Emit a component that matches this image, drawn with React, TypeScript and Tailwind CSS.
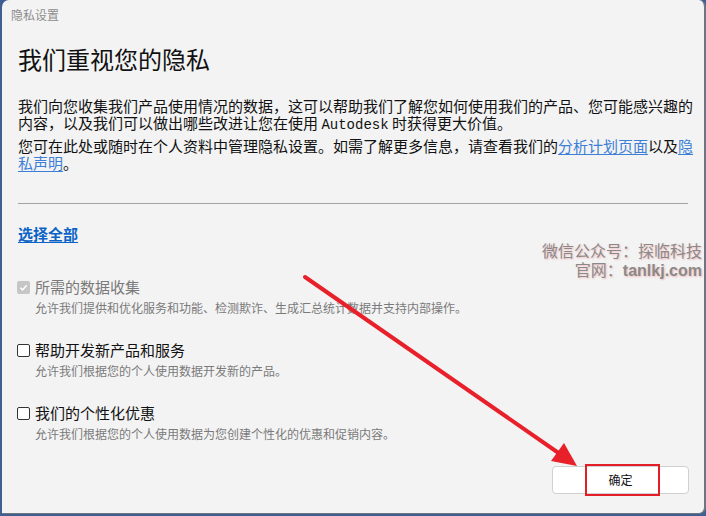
import React from 'react';

const cjk = { fontFamily: '"Noto Sans CJK SC", "Noto Sans", sans-serif' };

function Option({ label, desc, checked, disabled }: { label: string; desc: string; checked?: boolean; disabled?: boolean }) {
  return (
    <div className="flex flex-col">
      <div className="flex items-center gap-[5px]">
        {disabled ? (
          <span className="w-[13px] h-[13px] rounded-[2px] bg-[#c6c6c6] flex items-center justify-center">
            {checked && (
              <svg width="9" height="9" viewBox="0 0 10 10">
                <path d="M1.5 5.2 L4 7.6 L8.6 2.4" fill="none" stroke="#fff" strokeWidth="1.6" />
              </svg>
            )}
          </span>
        ) : (
          <span className="w-[13px] h-[13px] rounded-[2px] border border-[#333] bg-white" />
        )}
        <span className={`text-[15px] leading-[20px] ${disabled ? 'text-[#7a7a7a]' : 'text-[#111]'}`}>{label}</span>
      </div>
      <div className="pl-[18px] mt-[3px] text-[12px] leading-[16px] text-[#7a7a7a]">{desc}</div>
    </div>
  );
}

export default function App() {
  return (
    <div className="w-[706px] h-[516px] bg-[#3f5f93] pl-[2px] pb-[2px] overflow-hidden" style={cjk}>
      <div className="relative w-full h-full bg-[#f3f3f3] rounded-t-[7px] rounded-br-[7px] border-r-[2px] border-b-[1px] border-[#6e7682] flex flex-col">
        <div className="h-[30px] flex items-center px-[9px] text-[12px] text-[#8d8d8d]">隐私设置</div>

        <div className="px-[16px] flex flex-col">
          <h1 className="mt-[14px] text-[24px] leading-[30px] text-[#111] font-normal">我们重视您的隐私</h1>

          <p className="mt-[23px] w-[678px] text-[15px] leading-[17px] text-[#111]">
            我们向您收集我们产品使用情况的数据，这可以帮助我们了解您如何使用我们的产品、您可能感兴趣的内容，以及我们可以做出哪些改进让您在使用{' '}
            <span style={{ fontFamily: '"Liberation Mono", monospace' }} className="text-[14px]">Autodesk</span> 时获得更大价值。
          </p>
          <p className="mt-[3px] w-[678px] text-[15px] leading-[17px] text-[#111]">
            您可在此处或随时在个人资料中管理隐私设置。如需了解更多信息，请查看我们的
            <span className="text-[#3d7fd6] underline underline-offset-2">分析计划页面</span>以及
            <span className="text-[#3d7fd6] underline underline-offset-2">隐私声明</span>。
          </p>

          <div className="mt-[32px] h-px w-[670px] bg-[#a3a3a3]" />

          <div className="mt-[19px] text-[15px] leading-[22px] font-bold text-[#0b63c7] underline underline-offset-2">选择全部</div>

          <div className="mt-[32px] flex flex-col gap-[24px] -ml-[1px]">
            <Option label="所需的数据收集" desc="允许我们提供和优化服务和功能、检测欺诈、生成汇总统计数据并支持内部操作。" checked disabled />
            <Option label="帮助开发新产品和服务" desc="允许我们根据您的个人使用数据开发新的产品。" />
            <Option label="我们的个性化优惠" desc="允许我们根据您的个人使用数据为您创建个性化的优惠和促销内容。" />
          </div>
        </div>

        <div className="mt-auto mb-[19px] pr-[15px] flex justify-end">
          <button className="relative w-[137px] h-[28px] bg-white border border-[#d0d0d0] rounded-[4px] text-[12px] text-[#111]">
            确定
            <span className="absolute left-[32px] top-[-3px] w-[75px] h-[32px] border-2 border-[#e31e26]" />
          </button>
        </div>

        <div className="absolute right-[2px] top-[241px] flex flex-col items-end text-[16px] leading-[19px] text-[#8a8a8a] [text-shadow:1px_1px_2px_#f3b7bb]">
          <span>微信公众号：探临科技</span>
          <span style={{ fontFamily: '"Liberation Sans", "Noto Sans CJK SC", sans-serif' }} className="font-bold text-[16px]">
            <span style={cjk} className="font-normal">官网：</span>tanlkj.com
          </span>
        </div>

        <svg className="absolute left-[-2px] top-0 pointer-events-none" width="706" height="516" viewBox="0 0 706 516">
          <line x1="305" y1="277" x2="560" y2="454" stroke="#e8202a" strokeWidth="4" strokeLinecap="round" />
          <polygon points="577,466 551,461 564,443" fill="#e8202a" />
        </svg>
      </div>
    </div>
  );
}
